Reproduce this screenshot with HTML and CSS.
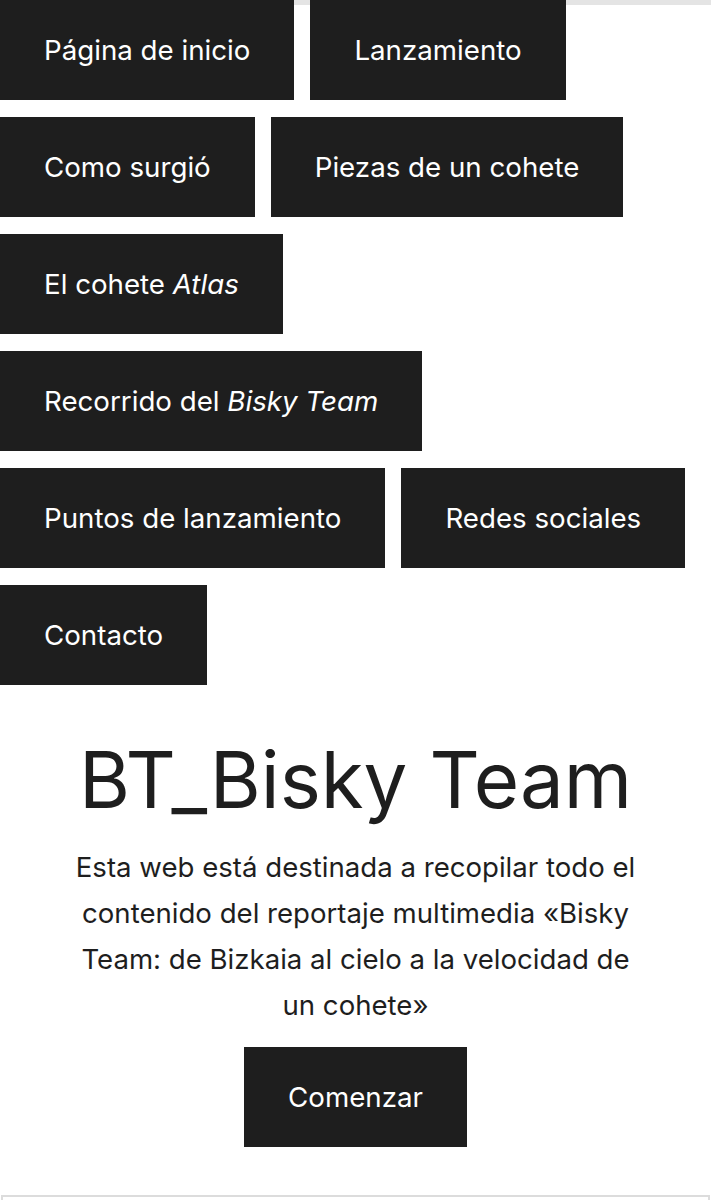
FILE: index.html
```html
<!DOCTYPE html>
<html lang="es">
<head>
    <meta charset="UTF-8">
    <meta name="viewport" content="width=device-width, initial-scale=1.0">
    <title>BT_Bisky Team</title>
    <link rel="stylesheet" href="styles.css">
</head>
<body>
    <nav class="menu">
        <a class="btn" href="#">Página de inicio</a>
        <a class="btn" href="#">Lanzamiento</a>
        <a class="btn" href="#">Como surgió</a>
        <a class="btn" href="#">Piezas de un cohete</a>
        <a class="btn" href="#">El cohete <em>Atlas</em></a>
        <a class="btn" href="#">Recorrido del <em>Bisky Team</em></a>
        <a class="btn" href="#">Puntos de lanzamiento</a>
        <a class="btn" href="#">Redes sociales</a>
        <a class="btn" href="#">Contacto</a>
    </nav>

    <section class="hero">
        <h1>BT_Bisky Team</h1>
        <p>Esta web está destinada a recopilar todo el contenido del reportaje multimedia «Bisky Team: de Bizkaia al cielo a la velocidad de un cohete»</p>
        <a class="btn" href="#">Comenzar</a>
    </section>

    <footer class="footer"></footer>
</body>
</html>
```

FILE: styles.css
```css
body {
    margin: 0;
    font-family: Inter, "Noto Sans", sans-serif;
    color: #1e1e1e;
    background: linear-gradient(#e4e4e4, #e4e4e4) no-repeat top / 100% 5px, #fff;
}

.btn {
    display: inline-block;
    background-color: #1e1e1e;
    color: #fff;
    text-decoration: none;
    font-size: 27.7px;
    line-height: 34px;
    padding: 33px 44px;
}

.btn em {
    font-style: italic;
}

.menu {
    display: flex;
    flex-wrap: wrap;
    gap: 17px 16px;
}

.hero {
    text-align: center;
    padding-top: 48px;
}

.hero h1 {
    font-size: 78px;
    font-weight: 400;
    line-height: 1.2;
    margin: 0 0 17px;
}

.hero p {
    font-size: 27.6px;
    line-height: 46px;
    max-width: 570px;
    margin: 0 auto 19px;
}

.hero .btn {
    padding: 33px 44px;
}

.footer {
    margin: 48px 1px 0;
    height: 60px;
    border: 2px solid #dcdcdc;
}
```
